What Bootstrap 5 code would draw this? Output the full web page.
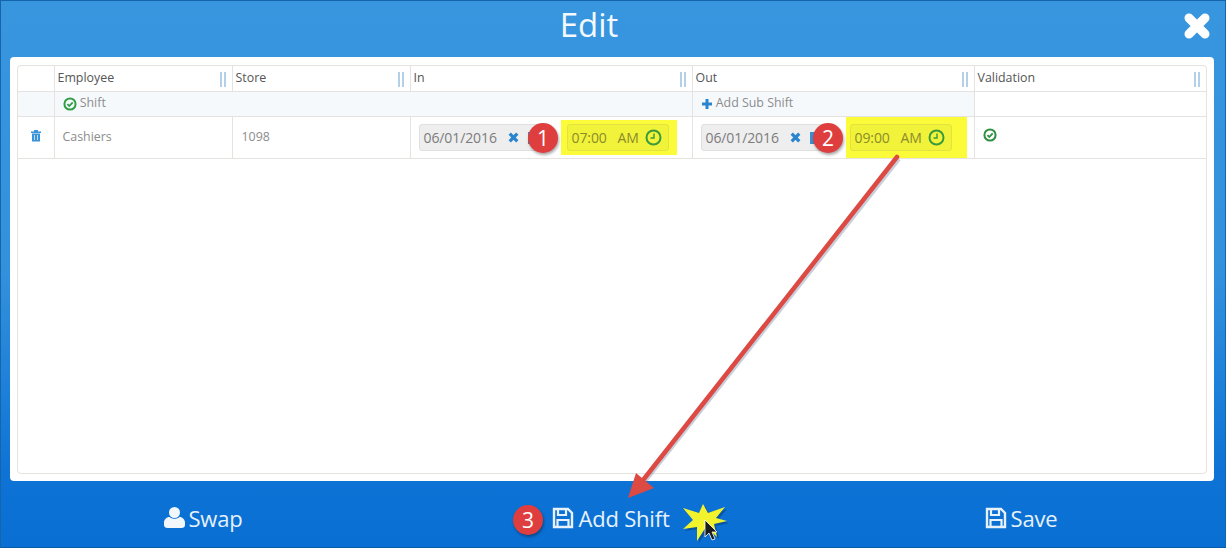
<!DOCTYPE html>
<html lang="en">
<head>
    <meta charset="UTF-8">
    <title>Edit</title>
    <link href="https://cdn.jsdelivr.net/npm/bootstrap@5.3.0/dist/css/bootstrap.min.css" rel="stylesheet">
    <style>
        html, body { height: 100%; overflow: hidden; }
        body { font-family: "Open Sans", "Noto Sans", sans-serif; background: #fff; }

        .win {
            position: relative;
            width: 1226px;
            height: 548px;
            background: linear-gradient(180deg, #3896df 0%, #3291dd 50%, #0e73d5 86%, #0a6fd3 100%);
            border: 1px solid #1565ad;
            border-bottom-color: #0a5aa8;
        }
        .win-head { height: 56px; padding-right: 48px; }
        .win-title { font-size: 33px; line-height: 47px; color: #f4f9fd; }
        .win-close { position: absolute; top: 9px; right: 12px; width: 32px; height: 32px; }

        .panel-box { height: 424px; margin: 0 11px 0 9px; border-radius: 4px; padding: 8px 7px 7px; }
        .grid-box { height: 100%; border: 1px solid #e6e3df; border-radius: 4px; }

        .sheet { table-layout: fixed; width: 100%; margin: 0; font-size: 12.4px; color: #8c8c8c; --bs-table-bg: transparent; }
        .sheet th, .sheet td { padding: 0; border: 0; border-bottom: 1px solid #e5e3e0; border-left: 1px solid #e5e3e0; vertical-align: middle; }
        .sheet th:first-child, .sheet td:first-child { border-left: 0; }
        .sheet th { height: 25px; font-weight: 400; color: #555; padding-left: 3px; position: relative; }
        .sheet td.sub-cell { height: 25px; background: #f6f9fc; padding-left: 8px; }
        .sheet td.plain-cell { background: #fff; }
        .sheet td.data-cell { height: 41px; }
        .sheet td.pad-name { padding-left: 8px; }
        .sheet td.pad-store { padding-left: 9px; }
        .sheet td.pad-check { padding-left: 8px; }
        .pad-check svg { margin-bottom: 4px; }
        .bin-icon { margin-bottom: 3px; }
        .grip { position: absolute; right: 6px; top: 6px; width: 6px; height: 15px; border-left: 2px solid #b4cfe8; border-right: 2px solid #b4cfe8; }

        .date-box, .time-box { height: 27px; border-radius: 3px; font-size: 14px; letter-spacing: -.1px; }
        .date-box { width: 125px; background: #eee; border: 1px solid #e0e0e0; color: #7c7c7c; padding-left: 4px; }
        .clear-icon { margin-left: 10px; }
        .time-box { width: 102px; padding: 0 5px 0 4px; background: #f1f23a; border: 1px solid #e2e33e; color: #8b8c2a; }
        .time-mark { background: #fbfb3a; height: 35px; width: 116px; margin-left: 17px; padding-left: 6px; }
        .time-mark-tall { height: 41px; width: 121px; margin-left: 20px; padding-left: 4px; }
        .cell-fill { padding-left: 8px; }

        .win-foot { height: 65px; padding-top: 10px; }
        .foot-btn { color: #e6f1fb; font-size: 22px; line-height: 30px; background: none; border: 0; padding: 0; letter-spacing: -.2px; }

        .pin { position: absolute; width: 30px; height: 30px; border-radius: 50%; background: #df3e3e; color: #fff; font-size: 21px; line-height: 30px; text-align: center; box-shadow: 1px 2px 3px rgba(0,0,0,.35); }
        .pin-one { left: 527px; top: 122px; }
        .pin-two { left: 812px; top: 122px; }
        .pin-three { left: 512px; top: 504px; }
        .mark-layer { position: absolute; left: -1px; top: -1px; pointer-events: none; }
    </style>
</head>
<body>
<div class="win">
    <div class="win-head text-center">
        <div class="win-title">Edit</div>
        <svg class="win-close" viewBox="0 0 32 32"><path d="M8 8 24 24M24 8 8 24" stroke="#fff" stroke-width="9" stroke-linecap="round"/></svg>
    </div>

    <div class="panel-box bg-white">
        <div class="grid-box">
            <table class="table sheet">
                <colgroup>
                    <col style="width:36px"><col style="width:178px"><col style="width:178px"><col style="width:282px"><col style="width:282px"><col>
                </colgroup>
                <thead>
                    <tr>
                        <th></th>
                        <th>Employee<span class="grip"></span></th>
                        <th>Store<span class="grip"></span></th>
                        <th>In<span class="grip"></span></th>
                        <th>Out<span class="grip"></span></th>
                        <th>Validation<span class="grip"></span></th>
                    </tr>
                </thead>
                <tbody>
                    <tr>
                        <td class="sub-cell"></td>
                        <td class="sub-cell" colspan="3">
                            <svg width="14" height="14" viewBox="0 0 14 14" class="align-middle"><circle cx="7" cy="7" r="5.6" fill="none" stroke="#2f9e44" stroke-width="2"/><path d="M4.4 7.2 6.3 9 9.7 5.4" fill="none" stroke="#2f9e44" stroke-width="1.8"/></svg>
                            Shift
                        </td>
                        <td class="sub-cell">
                            <svg width="12" height="12" viewBox="0 0 12 12" class="align-middle"><path d="M6 1V11M1 6H11" stroke="#2a85d0" stroke-width="3"/></svg>
                            Add Sub Shift
                        </td>
                        <td class="plain-cell"></td>
                    </tr>
                    <tr>
                        <td class="data-cell text-center">
                            <svg class="bin-icon" width="12" height="13" viewBox="0 0 12 13"><path d="M1 2.5H11V4H1ZM4 2.5V1H8V2.5ZM2 4.5H10V12.5H2Z" fill="#3a93d8"/><path d="M4.5 6V11M7.5 6V11" stroke="#bcdaf2" stroke-width="1"/></svg>
                        </td>
                        <td class="data-cell pad-name">Cashiers</td>
                        <td class="data-cell pad-store">1098</td>
                        <td class="data-cell">
                            <div class="d-flex align-items-center cell-fill">
                                <div class="date-box d-flex align-items-center">06/01/2016
                                    <svg class="clear-icon" width="13" height="13" viewBox="0 0 12 12"><path d="M2.5 2.5 9.5 9.5M9.5 2.5 2.5 9.5" stroke="#2a85d0" stroke-width="3"/></svg>
                                    <svg class="ms-2" width="11" height="13" viewBox="0 0 11 13"><rect x="0" y="1" width="11" height="12" fill="#3a8fd3"/></svg>
                                </div>
                                <div class="time-mark d-flex align-items-center flex-shrink-0">
                                    <div class="time-box d-flex align-items-center justify-content-between">
                                        <span>07:00</span><span class="ms-1">AM</span>
                                        <svg width="17" height="17" viewBox="0 0 17 17"><circle cx="8.5" cy="8.5" r="7" fill="none" stroke="#3c9a3c" stroke-width="2"/><path d="M9 4.5V9H5.5" fill="none" stroke="#3c9a3c" stroke-width="1.4"/></svg>
                                    </div>
                                </div>
                            </div>
                        </td>
                        <td class="data-cell">
                            <div class="d-flex align-items-center cell-fill">
                                <div class="date-box d-flex align-items-center">06/01/2016
                                    <svg class="clear-icon" width="13" height="13" viewBox="0 0 12 12"><path d="M2.5 2.5 9.5 9.5M9.5 2.5 2.5 9.5" stroke="#2a85d0" stroke-width="3"/></svg>
                                    <svg class="ms-2" width="11" height="13" viewBox="0 0 11 13"><rect x="0" y="1" width="11" height="12" fill="#3a8fd3"/></svg>
                                </div>
                                <div class="time-mark time-mark-tall d-flex align-items-center flex-shrink-0">
                                    <div class="time-box d-flex align-items-center justify-content-between">
                                        <span>09:00</span><span class="ms-1">AM</span>
                                        <svg width="17" height="17" viewBox="0 0 17 17"><circle cx="8.5" cy="8.5" r="7" fill="none" stroke="#3c9a3c" stroke-width="2"/><path d="M9 4.5V9H5.5" fill="none" stroke="#3c9a3c" stroke-width="1.4"/></svg>
                                    </div>
                                </div>
                            </div>
                        </td>
                        <td class="data-cell pad-check">
                            <svg width="14" height="14" viewBox="0 0 14 14"><circle cx="7" cy="7" r="5.6" fill="none" stroke="#2f8f40" stroke-width="2"/><path d="M4.4 7.2 6.3 9 9.7 5.4" fill="none" stroke="#2f8f40" stroke-width="1.8"/></svg>
                        </td>
                    </tr>
                </tbody>
            </table>
        </div>
    </div>

    <div class="win-foot row g-0 align-items-center text-center">
        <div class="col-4">
            <button class="foot-btn d-inline-flex align-items-center gap-1 me-1" type="button">
                <svg width="21" height="21" viewBox="0 0 21 21"><circle cx="10.5" cy="5.5" r="5.5" fill="#f2f7fc"/><path d="M3.5 21C1.5 21 0 19.8 0 18V15.5C0 12.5 2.5 10 5.5 10 7.5 12.4 13.5 12.4 15.5 10 18.5 10 21 12.5 21 15.5V18C21 19.8 19.5 21 17.5 21Z" fill="#f2f7fc"/></svg>Swap
            </button>
        </div>
        <div class="col-4">
            <button class="foot-btn d-inline-flex align-items-center gap-1 me-1" type="button">
                <svg width="22" height="22" viewBox="0 0 22 22"><path d="M2 2H16L20 6V20H2Z" fill="none" stroke="#e6f1fb" stroke-width="2.4"/><path d="M6 3V8H14V3M5.5 20V13H16.5V20" fill="none" stroke="#e6f1fb" stroke-width="2.2"/></svg>Add Shift
            </button>
        </div>
        <div class="col-4">
            <button class="foot-btn d-inline-flex align-items-center gap-1" type="button">
                <svg width="22" height="22" viewBox="0 0 22 22"><path d="M2 2H16L20 6V20H2Z" fill="none" stroke="#e6f1fb" stroke-width="2.4"/><path d="M6 3V8H14V3M5.5 20V13H16.5V20" fill="none" stroke="#e6f1fb" stroke-width="2.2"/></svg>Save
            </button>
        </div>
    </div>

    <svg class="mark-layer" width="1226" height="548" viewBox="0 0 1226 548">
        <path d="M897 157 637 487" stroke="#1b3f70" stroke-opacity=".25" stroke-width="4" transform="translate(2 2)"/>
        <path d="M897 157 640 484" stroke="#dc4a43" stroke-width="4.5" stroke-linecap="round"/>
        <path d="M628 498 636 473 654 488Z" fill="#dc4a43"/>
        <path d="M683 508 699 513 703 504 708 513 725 507 716 518 727 521 714 524 717 537 706 527 697 541 697 527 683 529 693 520Z" fill="#0b3f78" fill-opacity=".55" transform="translate(2 2)"/>
        <path d="M683 508 699 513 703 504 708 513 725 507 716 518 727 521 714 524 717 537 706 527 697 541 697 527 683 529 693 520Z" fill="#f2f32c"/>
        <path d="M705 520V537L709 533 712 540 715 539 712 532H717Z" fill="#1b1b1b" stroke="#fff" stroke-width=".8"/>
    </svg>

    <div class="pin pin-one">1</div>
    <div class="pin pin-two">2</div>
    <div class="pin pin-three">3</div>
</div>
<script src="https://cdn.jsdelivr.net/npm/bootstrap@5.3.0/dist/js/bootstrap.bundle.min.js"></script>
</body>
</html>
